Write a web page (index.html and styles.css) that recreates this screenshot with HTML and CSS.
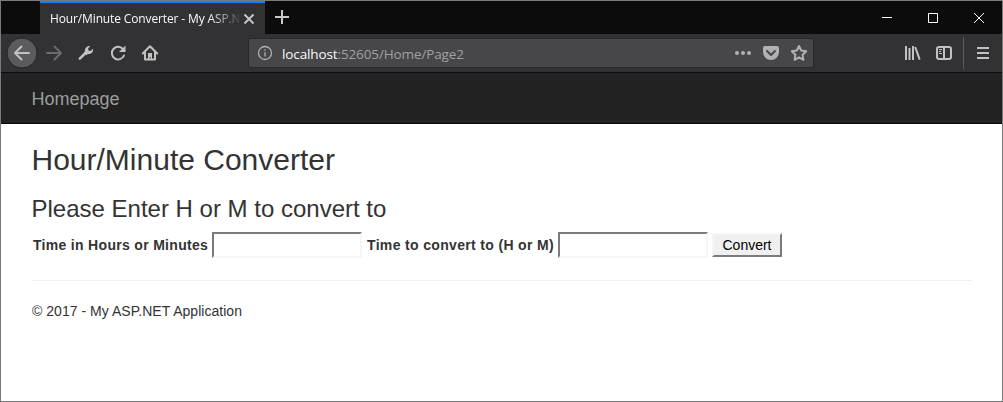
FILE: index.html
```html
<!DOCTYPE html>
<html lang="en">
<head>
<meta charset="utf-8">
<title>Hour/Minute Converter - My ASP.NET Application</title>
<link rel="stylesheet" href="styles.css">
</head>
<body>
<div class="window">
  <div class="tabbar">
    <div class="tab">
      <span class="tab-title">Hour/Minute Converter - My ASP.N</span>
      <svg class="tab-close" width="12" height="12" viewBox="0 0 12 12"><path d="M1.500 1.500l9 9M10.500 1.500l-9 9"/></svg>
    </div>
    <svg class="new-tab" width="16" height="16" viewBox="0 0 16 16"><path d="M8 1v14M1 8h14"/></svg>
    <div class="window-controls">
      <svg width="46" height="33" viewBox="0 0 46 33"><path d="M18 16.500h10"/></svg>
      <svg width="46" height="33" viewBox="0 0 46 33"><path d="M18.500 12.500h9v9h-9z"/></svg>
      <svg width="46" height="33" viewBox="0 0 46 33"><path d="M18 12l10 10M28 12L18 22"/></svg>
    </div>
  </div>
  <div class="toolbar">
    <div class="nav-icons">
      <svg width="32" height="32" viewBox="0 0 32 32"><circle class="back-disc" cx="16" cy="16" r="15"/><path class="line" d="M23 16H9.500M15.500 9.500L9 16l6.500 6.500"/></svg>
      <svg class="disabled" width="32" height="32" viewBox="0 0 32 32"><path class="line" d="M9 16h13.500M16.500 9.500L23 16l-6.500 6.500"/></svg>
      <svg width="32" height="32" viewBox="0 0 32 32"><path class="line wrench" d="M9.800 21.700l6.200-6.200"/><path class="fill" d="M20.300 9c-3.600-.4-6 2.400-5.200 5.300l-1.300 1.400 2.600 2.600 1.500-1.400c3 .8 5.700-1.600 5.100-5.100l-2.500 2.200-2-.4-.4-2.200z"/></svg>
      <svg width="32" height="32" viewBox="0 0 32 32"><path class="line" d="M21.300 12.500A6.300 6.300 0 1 0 22 18.500"/><path class="fill" d="M23.500 8.500V15H17z"/></svg>
      <svg width="32" height="32" viewBox="0 0 32 32"><path class="line" d="M8.800 16.500L16 9.200l7.200 7.300M11 15.500v7h10v-7"/><path class="fill" d="M14 16h4v6h-1.300v-2h-1v2H14z"/></svg>
    </div>
    <div class="urlbar">
      <svg class="info" width="16" height="16" viewBox="0 0 16 16"><circle cx="8" cy="8" r="6.500"/><path d="M8 7v4.500M8 4.300v1.500"/></svg>
      <div class="url"><span class="host">localhost</span>:52605/Home/Page2</div>
      <div class="url-actions">
        <svg width="28" height="28" viewBox="0 0 28 28"><g class="fill"><circle cx="8" cy="14" r="2"/><circle cx="14" cy="14" r="2"/><circle cx="20" cy="14" r="2"/></g></svg>
        <svg width="28" height="28" viewBox="0 0 28 28"><path class="fill" d="M8 7h12q2 0 2 2v4a8 8 0 0 1-16 0V9q0-2 2-2z"/><path class="pocket-mark" d="M10 12l4 4 4-4"/></svg>
        <svg width="28" height="28" viewBox="0 0 28 28"><path class="star" d="M14 7l2.200 4.500 5 .8-3.600 3.500.8 5-4.400-2.400-4.400 2.400.8-5-3.600-3.500 5-.8z"/></svg>
      </div>
    </div>
    <div class="tools">
      <svg width="32" height="32" viewBox="0 0 32 32"><path class="line flat" d="M10 9v14M13.500 11v12M17 9v14M19.200 10l4.500 12.700"/></svg>
      <svg width="32" height="32" viewBox="0 0 32 32"><rect class="line" x="9" y="10" width="14" height="12" rx="2"/><path class="line" d="M16 10v12"/><path class="thin" d="M11 12.500h3M11 14.500h2M11 16.500h3"/></svg>
    </div>
    <div class="menu">
      <svg width="14" height="14" viewBox="0 0 14 14"><path class="line" d="M1 2h12M1 7h12M1 12h12"/></svg>
    </div>
  </div>
  <nav class="navbar"><a class="brand">Homepage</a></nav>
  <main class="content">
    <h2>Hour/Minute Converter</h2>
    <h3>Please Enter H or M to convert to</h3>
    <form class="converter">
      <label class="label-time" for="time">Time in Hours or Minutes</label>
      <input id="time" type="text">
      <label class="label-unit" for="unit">Time to convert to (H or M)</label>
      <input id="unit" type="text">
      <button type="button">Convert</button>
    </form>
    <hr>
    <footer>© 2017 - My ASP.NET Application</footer>
  </main>
</div>
</body>
</html>
```
FILE: styles.css
```css
* { box-sizing: border-box; }
body { margin: 0; }
svg { display: block; flex: none; fill: none; }
.window {
  width: 1003px;
  height: 402px;
  border: 1px solid #7b7b7b;
  background: #fff;
  font-family: "Liberation Sans", Arial, sans-serif;
  color: #333;
  overflow: hidden;
}
.tabbar {
  display: flex;
  height: 33px;
  padding-left: 39px;
  background: #0c0c0d;
}
.tab {
  display: flex;
  align-items: center;
  width: 225px;
  padding: 0 10px;
  border-top: 2px solid #0a84ff;
  background: #323234;
}
.tab-title {
  width: 189px;
  white-space: nowrap;
  font: 12px/18px "Open Sans", sans-serif;
  letter-spacing: -.13px;
  color: #f9f9fa;
  -webkit-mask-image: linear-gradient(to right, #000 158px, transparent 194px);
  mask-image: linear-gradient(to right, #000 158px, transparent 194px);
}
.tab-close { margin-left: 4px; stroke: #c8c8c9; stroke-width: 1.8; }
.new-tab { margin: 8px 0 0 9px; stroke: #c8c8c9; stroke-width: 2; }
.window-controls { display: flex; margin-left: auto; stroke: #fff; stroke-width: 1; }
.toolbar {
  display: flex;
  align-items: center;
  height: 39px;
  padding-left: 5px;
  border-bottom: 1px solid #0c0c0d;
  background: #323234;
}
.nav-icons, .tools { display: flex; }
.line { stroke: #c1c1c2; stroke-width: 2; stroke-linecap: round; stroke-linejoin: round; }
.flat { stroke-linecap: butt; }
.wrench { stroke-width: 2.6; }
.fill { fill: #c1c1c2; }
.thin { stroke: #c1c1c2; stroke-width: 1; }
.back-disc { fill: #5b5b5d; stroke: #252526; stroke-width: 1; }
.disabled { opacity: .4; }
.urlbar {
  display: flex;
  align-items: center;
  width: 566px;
  height: 30px;
  margin-left: 82px;
  padding-left: 8px;
  border: 1px solid #29292b;
  border-radius: 2px;
  background: #474749;
}
.info { stroke: #b1b1b3; stroke-width: 1.3; }
.url {
  margin: 2px 0 0 9px;
  font: 13.5px/20px "Open Sans", sans-serif;
  letter-spacing: -.12px;
  color: #a0a0a2;
}
.host { color: #f9f9fa; }
.url-actions { display: flex; margin-left: auto; }
.url-actions .fill { fill: #b1b1b3; }
.pocket-mark { stroke: #474749; stroke-width: 2; stroke-linecap: round; stroke-linejoin: round; }
.star { stroke: #b1b1b3; stroke-width: 2; stroke-linejoin: round; }
.tools { margin-left: 82px; }
.menu {
  display: flex;
  align-items: center;
  height: 32px;
  margin-left: 3px;
  padding-left: 12px;
  border-left: 1px solid #5b5b5d;
}
.menu .line { stroke-linecap: butt; }
.navbar {
  height: 51px;
  padding: 16px 30.5px;
  border-bottom: 1px solid #080808;
  background: #222;
}
.brand { display: block; font-size: 18px; line-height: 21px; color: #9d9d9d; }
.content { padding: 19px 30px 0 31px; }
h2, h3 { margin: 0; font-weight: 400; text-indent: -.5px; }
h2 { font-size: 30px; line-height: 33px; }
h3 { margin-top: 20px; font-size: 24px; line-height: 26px; }
.converter {
  display: flex;
  align-items: center;
  gap: 4px;
  height: 26px;
  margin-top: 10px;
}
label { white-space: nowrap; font-size: 14px; font-weight: 700; line-height: 20px; }
.label-time { width: 176px; padding-left: 1px; letter-spacing: .31px; }
.label-unit { width: 188px; padding-left: 1px; letter-spacing: .34px; }
input {
  width: 150px;
  height: 26px;
  padding: 1px;
  border: 2px solid;
  border-color: #7b7b7b #f5f5f5 #f5f5f5 #7b7b7b;
  background: #fff;
}
button {
  width: 70px;
  height: 24px;
  padding: 0;
  border: 2px solid;
  border-color: #f5f5f5 #7b7b7b #7b7b7b #f5f5f5;
  background: #f0f0f0;
  font: 14px/20px "Liberation Sans", Arial, sans-serif;
  color: #000;
}
hr { height: 1px; margin: 22px 0 20px; border: 0; background: #eee; }
footer { font-size: 14px; line-height: 20px; letter-spacing: .03px; }
```
